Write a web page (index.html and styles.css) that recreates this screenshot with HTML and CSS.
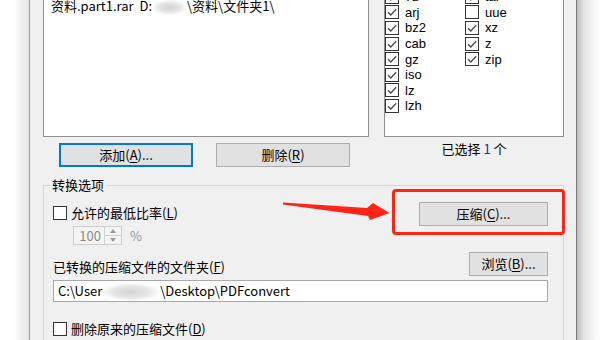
FILE: index.html
```html
<!DOCTYPE html>
<html lang="zh-CN">
<head>
<meta charset="utf-8">
<title>转换压缩文件</title>
<link rel="stylesheet" href="styles.css">
</head>
<body>
<div class="screen">
  <div class="shade-l"></div>
  <div class="window">
    <div class="lists">
      <div class="filelist">
        <div class="fileitem">资料.part1.rar&nbsp;&nbsp;D:<span class="smudge"></span>\资料\文件夹1\</div>
      </div>
      <div class="typelist">
        <div class="col">
          <div class="opt"><span class="cb"><svg viewBox="0 0 12 12"><path d="M2 6.3 L4.8 9 L10.2 3.2"/></svg></span><span class="ext">7z</span></div>
          <div class="opt"><span class="cb"><svg viewBox="0 0 12 12"><path d="M2 6.3 L4.8 9 L10.2 3.2"/></svg></span><span class="ext">arj</span></div>
          <div class="opt"><span class="cb"><svg viewBox="0 0 12 12"><path d="M2 6.3 L4.8 9 L10.2 3.2"/></svg></span><span class="ext">bz2</span></div>
          <div class="opt"><span class="cb"><svg viewBox="0 0 12 12"><path d="M2 6.3 L4.8 9 L10.2 3.2"/></svg></span><span class="ext">cab</span></div>
          <div class="opt"><span class="cb"><svg viewBox="0 0 12 12"><path d="M2 6.3 L4.8 9 L10.2 3.2"/></svg></span><span class="ext">gz</span></div>
          <div class="opt"><span class="cb"><svg viewBox="0 0 12 12"><path d="M2 6.3 L4.8 9 L10.2 3.2"/></svg></span><span class="ext">iso</span></div>
          <div class="opt"><span class="cb"><svg viewBox="0 0 12 12"><path d="M2 6.3 L4.8 9 L10.2 3.2"/></svg></span><span class="ext">lz</span></div>
          <div class="opt"><span class="cb"><svg viewBox="0 0 12 12"><path d="M2 6.3 L4.8 9 L10.2 3.2"/></svg></span><span class="ext">lzh</span></div>
        </div>
        <div class="col">
          <div class="opt"><span class="cb"><svg viewBox="0 0 12 12"><path d="M2 6.3 L4.8 9 L10.2 3.2"/></svg></span><span class="ext">tar</span></div>
          <div class="opt"><span class="cb"></span><span class="ext">uue</span></div>
          <div class="opt"><span class="cb"><svg viewBox="0 0 12 12"><path d="M2 6.3 L4.8 9 L10.2 3.2"/></svg></span><span class="ext">xz</span></div>
          <div class="opt"><span class="cb"><svg viewBox="0 0 12 12"><path d="M2 6.3 L4.8 9 L10.2 3.2"/></svg></span><span class="ext">z</span></div>
          <div class="opt"><span class="cb"><svg viewBox="0 0 12 12"><path d="M2 6.3 L4.8 9 L10.2 3.2"/></svg></span><span class="ext">zip</span></div>
        </div>
      </div>
    </div>

    <div class="actions">
      <div class="btns">
        <button class="btn focus">添加(<u>A</u>)...</button>
        <button class="btn">删除(<u>R</u>)</button>
      </div>
      <div class="count">已选择 <span class="num">1</span> 个</div>
    </div>

    <div class="group">
      <div class="legend">转换选项</div>
      <div class="row-a">
        <label class="check"><span class="cb"></span><span class="check-text">允许的最低比率(<u>L</u>)</span></label>
        <button class="btn compress">压缩(<u>C</u>)...</button>
      </div>
      <div class="spin-row">
        <div class="spin">
          <span class="spin-val">100</span>
          <span class="spin-btns"><span class="up"></span><span class="down"></span></span>
        </div>
        <span class="pct">%</span>
      </div>
      <div class="row-c">
        <span class="folder-label">已转换的压缩文件的文件夹(<u>F</u>)</span>
        <button class="btn browse">浏览(<u>B</u>)...</button>
      </div>
      <div class="path">C:\User<span class="smudge wide"></span>\Desktop\PDFconvert</div>
      <label class="check del"><span class="cb"></span><span class="check-text">删除原来的压缩文件(<u>D</u>)</span></label>
    </div>
  </div>
  <div class="shade-r"></div>

  <div class="highlight"></div>
  <svg class="arrow" viewBox="0 0 600 340" width="600" height="340">
    <polygon points="283,202.5 367,208 373,203 389.5,213 370,220 368,216 283,204.5"/>
  </svg>
</div>
</body>
</html>
```

FILE: styles.css
```css
* { box-sizing: border-box; }

body {
  margin: 0;
  background: #fff;
  font-family: "Noto Sans CJK SC", "Noto Sans", sans-serif;
  font-size: 13px;
  color: #000;
  overflow: hidden;
}

.screen {
  position: relative;
  display: flex;
  width: 600px;
  height: 340px;
  overflow: hidden;
}

.shade-l {
  width: 29px;
  flex: none;
  background: linear-gradient(to right, #fff 0, #fff 14px, #e2e2e2 29px);
}

.window {
  width: 548px;
  flex: none;
  border-left: 1px solid #9a9a9a;
  border-right: 1px solid #7a7a7a;
  background: #f0f0f0;
  padding: 0 12px 0 13px;
}

.shade-r {
  flex: 1;
  background: linear-gradient(to right, #bdbdbd 0, #e4e4e4 7px, #f8f8f8 18px, #fff 24px);
}

/* top lists */
.lists {
  display: flex;
  gap: 15px;
  margin-top: -20px;
  height: 157px;
}

.filelist {
  width: 326px;
  background: #fff;
  border: 1px solid #8c8f93;
  padding: 17px 0 0 7px;
  line-height: 16px;
  white-space: nowrap;
}

.typelist {
  width: 180px;
  background: #fff;
  border: 1px solid #8c8f93;
  display: flex;
  padding-top: 8px;
}

.col { width: 80px; }

.opt {
  height: 15.6px;
  display: flex;
  align-items: center;
  gap: 6px;
}

.ext {
  font-family: "Liberation Sans", "Noto Sans", sans-serif;
  font-size: 13px;
  line-height: 15px;
}

.cb {
  width: 14px;
  height: 14px;
  flex: none;
  border: 1px solid #333;
  background: #fff;
  display: inline-flex;
}

.cb svg {
  width: 12px;
  height: 12px;
  fill: none;
  stroke: #4a4a4a;
  stroke-width: 1.3;
}

.smudge {
  display: inline-block;
  width: 35px;
  height: 15px;
  vertical-align: middle;
  background: radial-gradient(ellipse at center, #d4d4d4 0%, #e6e6e6 45%, rgba(255,255,255,0) 72%);
}

.smudge.wide {
  width: 58px;
  height: 18px;
}

/* buttons row */
.actions {
  display: flex;
  gap: 15px;
  height: 48px;
}

.btns {
  width: 326px;
  display: flex;
  gap: 23px;
  padding: 6px 0 0 16px;
}

.btn {
  width: 134px;
  height: 24px;
  background: #e1e1e1;
  border: 1px solid #adadad;
  font: inherit;
  color: #000;
  padding: 0;
  line-height: 20px;
}

.btn u { text-underline-offset: 2px; }

.btn.focus {
  border-color: #0078d7;
  box-shadow: inset 0 0 0 1px #0078d7;
}

.count {
  width: 180px;
  text-align: center;
  padding-top: 4px;
  line-height: 16px;
}

.num { color: #1c2f8a; }

/* group box */
.group {
  width: 521px;
  height: 160px;
  border: 1px solid #d6d6d6;
  border-bottom: none;
  padding: 0 15px 0 9px;
}

.legend {
  width: max-content;
  margin: -10px 0 0 -3px;
  padding: 0 2px;
  background: #f0f0f0;
  line-height: 18px;
}

.row-a {
  display: flex;
  justify-content: space-between;
  align-items: flex-start;
  margin-top: 8px;
  height: 24px;
}

.check {
  display: flex;
  align-items: center;
  gap: 4px;
  line-height: 18px;
  margin-top: 2px;
}

.compress { width: 129px; }

.spin-row {
  display: flex;
  align-items: center;
  margin-left: 20px;
  height: 19px;
}

.spin {
  width: 49px;
  height: 19px;
  border: 1px solid #cdcdcd;
  background: #f4f4f4;
  display: flex;
}

.spin-val {
  flex: 1;
  color: #8a8a8a;
  text-align: right;
  padding-right: 3px;
  line-height: 17px;
}

.spin-btns {
  width: 17px;
  border-left: 1px solid #d0d0d0;
  display: flex;
  flex-direction: column;
}

.spin-btns .up,
.spin-btns .down {
  flex: 1;
  display: flex;
  align-items: center;
  justify-content: center;
}

.spin-btns .up { border-bottom: 1px solid #d0d0d0; }

.spin-btns .up::before {
  content: "";
  border-left: 3.5px solid transparent;
  border-right: 3.5px solid transparent;
  border-bottom: 4px solid #9a9a9a;
}

.spin-btns .down::before {
  content: "";
  border-left: 3.5px solid transparent;
  border-right: 3.5px solid transparent;
  border-top: 4px solid #9a9a9a;
}

.pct {
  margin-left: 8px;
  color: #9a9a9a;
}

.row-c {
  display: flex;
  justify-content: space-between;
  align-items: flex-start;
  margin-top: 7px;
}

.folder-label {
  margin-top: 6px;
  line-height: 18px;
}

.browse { width: 79px; }

.path {
  margin-top: 4px;
  height: 22px;
  border: 1px solid #a9a9a9;
  background: #fff;
  padding-left: 4px;
  line-height: 20px;
  white-space: nowrap;
}

.check.del { margin-top: 18px; }

/* annotation overlay */
.highlight {
  position: absolute;
  left: 392px;
  top: 189px;
  width: 173px;
  height: 46px;
  border: 3px solid #ff2318;
  border-radius: 4px;
}

.arrow {
  position: absolute;
  left: 0;
  top: 0;
  fill: #ff2318;
  pointer-events: none;
}
```
